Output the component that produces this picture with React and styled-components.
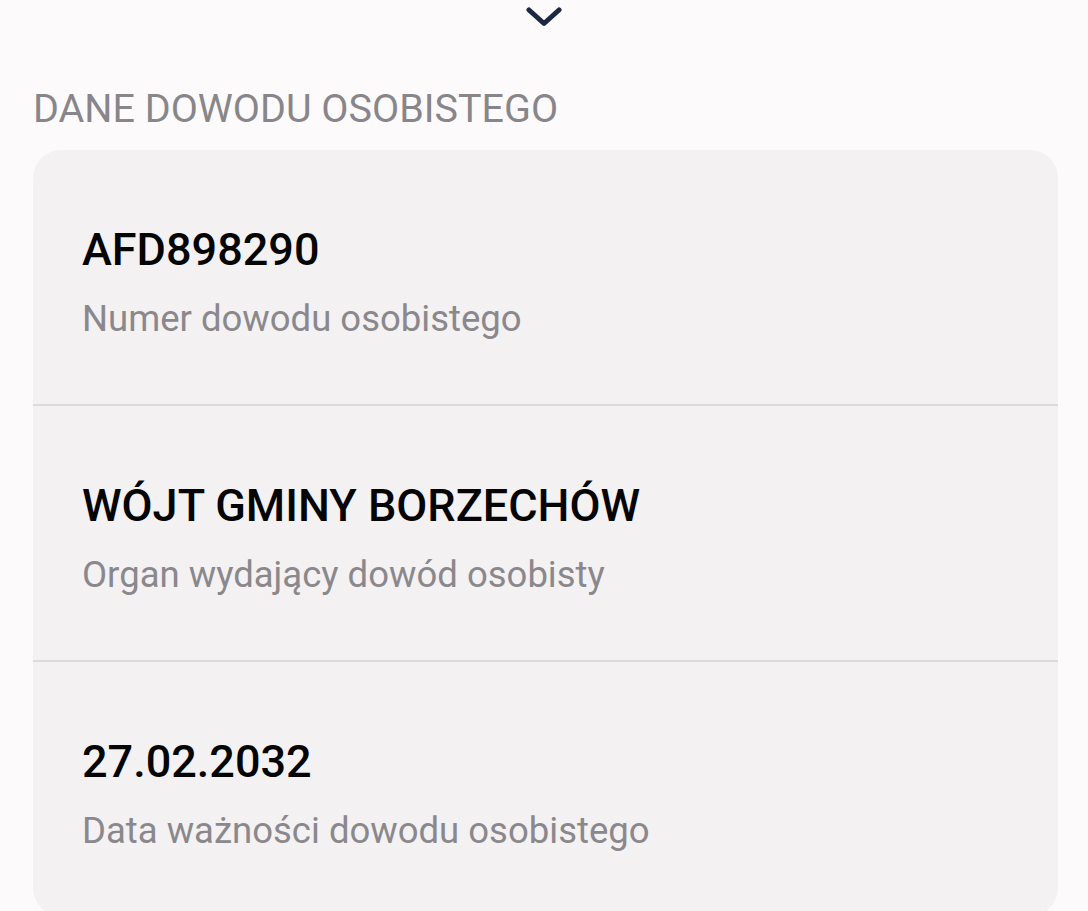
import React from "react";
import styled, { createGlobalStyle } from "styled-components";

const Global = createGlobalStyle`
  html, body { margin: 0; padding: 0; background: #fdfafb; }
  body { font-family: Roboto, "Noto Sans", sans-serif; -webkit-font-smoothing: antialiased; }
`;

const Page = styled.div`
  width: 1088px;
  height: 911px;
  overflow: hidden;
  background: #fdfafb;
  box-sizing: border-box;
  padding: 0 30px 0 33px;
  display: flex;
  flex-direction: column;
`;

const ChevronBar = styled.div`
  display: flex;
  justify-content: center;
  padding-top: 6px;
  height: 24px;
  margin-left: -3px;
`;

const SectionTitle = styled.h2`
  margin: 0;
  margin-top: 58px;
  font-size: 39.5px;
  line-height: 46px;
  font-weight: 400;
  color: #88868a;
  letter-spacing: 0;
`;

const Card = styled.div`
  margin-top: 18px;
  background: #f3f1f2;
  border-radius: 28px;
  display: flex;
  flex-direction: column;
`;

const Row = styled.div`
  height: ${(p) => (p.$first ? "254px" : "256px")};
  box-sizing: border-box;
  padding: 73px 49px 0;
  display: flex;
  flex-direction: column;
  border-top: ${(p) => (p.$first ? "none" : "2px solid #dcdadc")};
`;

const Value = styled.div`
  font-size: 45px;
  line-height: 54px;
  font-weight: 500;
  color: #050505;
`;

const Label = styled.div`
  margin-top: 20px;
  font-size: 36.5px;
  line-height: 44px;
  color: #8a888c;
`;

const items = [
  { value: "AFD898290", label: "Numer dowodu osobistego" },
  { value: "WÓJT GMINY BORZECHÓW", label: "Organ wydający dowód osobisty" },
  { value: "27.02.2032", label: "Data ważności dowodu osobistego" },
];

export default function App() {
  return (
    <>
      <Global />
      <Page>
        <ChevronBar>
          <svg width="36" height="22" viewBox="0 0 36 22" fill="none">
            <path d="M3 4 L18 17.5 L33 4" stroke="#1b2843" strokeWidth="5" strokeLinecap="round" strokeLinejoin="round" />
          </svg>
        </ChevronBar>
        <SectionTitle>DANE DOWODU OSOBISTEGO</SectionTitle>
        <Card>
          {items.map((it, i) => (
            <Row key={i} $first={i === 0}>
              <Value>{it.value}</Value>
              <Label>{it.label}</Label>
            </Row>
          ))}
        </Card>
      </Page>
    </>
  );
}
